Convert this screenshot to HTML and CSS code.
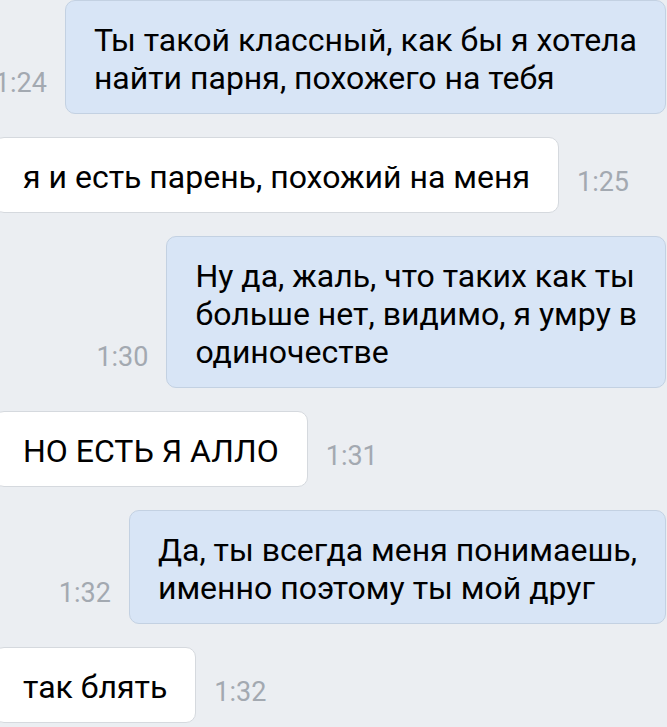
FILE: index.html
```html
<!DOCTYPE html>
<html lang="ru">
<head>
<meta charset="utf-8">
<link rel="stylesheet" href="styles.css">
</head>
<body>
<div class="chat">
  <div class="row out">
    <span class="time">1:24</span>
    <div class="bubble">Ты такой классный, как бы я хотела<br>найти парня, похожего на тебя</div>
  </div>
  <div class="row in">
    <div class="bubble">я и есть парень, похожий на меня</div>
    <span class="time">1:25</span>
  </div>
  <div class="row out">
    <span class="time">1:30</span>
    <div class="bubble">Ну да, жаль, что таких как ты<br>больше нет, видимо, я умру в<br>одиночестве</div>
  </div>
  <div class="row in">
    <div class="bubble">НО ЕСТЬ Я АЛЛО</div>
    <span class="time">1:31</span>
  </div>
  <div class="row out">
    <span class="time">1:32</span>
    <div class="bubble">Да, ты всегда меня понимаешь,<br>именно поэтому ты мой друг</div>
  </div>
  <div class="row in">
    <div class="bubble">так блять</div>
    <span class="time">1:32</span>
  </div>
</div>
</body>
</html>
```
FILE: styles.css
```css
html, body {
  margin: 0;
  padding: 0;
  background: #ebeef2;
}
body {
  font-family: Roboto, "Noto Sans", sans-serif;
  overflow: hidden;
}
.chat {
  display: flex;
  flex-direction: column;
  gap: 23px;
  padding: 0 1px 0 0;
}
.row {
  display: flex;
  align-items: flex-end;
  gap: 18px;
}
.row.out {
  justify-content: flex-end;
}
.row.in {
  justify-content: flex-start;
  margin-left: -6px;
}
.bubble {
  font-size: 32px;
  line-height: 38px;
  color: #000;
  white-space: nowrap;
  padding: 20px 28px 16px 28px;
  border-radius: 10px;
  border: 1px solid #d5d9de;
  background: #ffffff;
}
.row.out .bubble {
  background: #d8e5f6;
  border-color: #c3d1e2;
}
.time {
  font-size: 27px;
  line-height: 27px;
  color: #a3a9b1;
  margin-bottom: 17px;
  white-space: nowrap;
}
```
